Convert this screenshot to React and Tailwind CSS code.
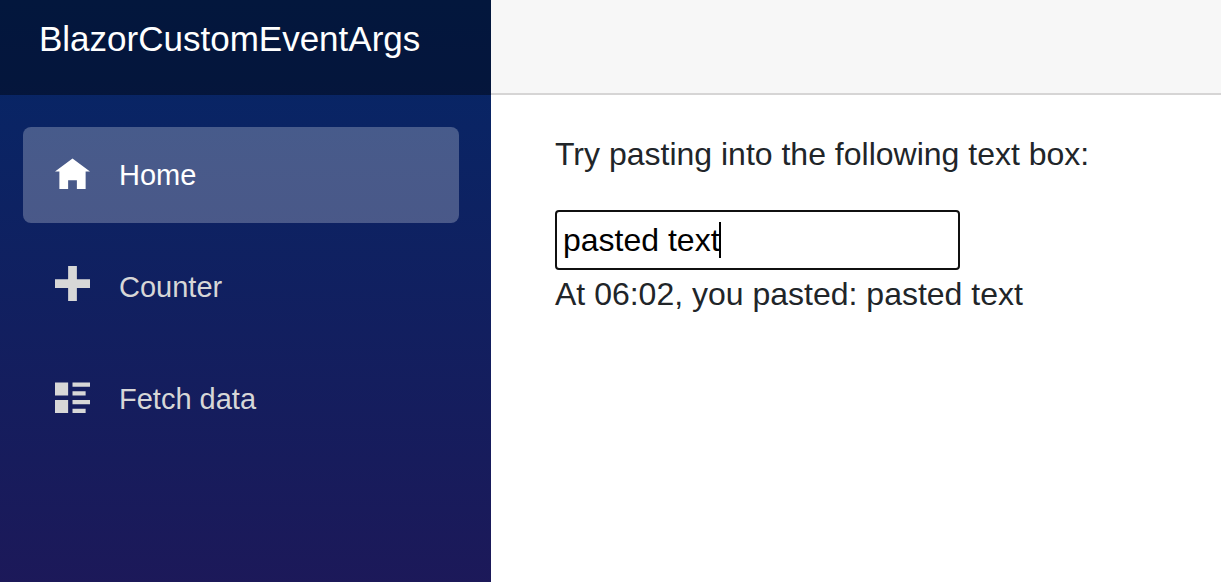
import { useState } from "react";

const links = [
  {
    label: "Home",
    path: "M4 1l-4 3h1v4h2v-2h2v2h2v-4h1l-4-3z",
  },
  {
    label: "Counter",
    path: "M3 0v3h-3v2h3v3h2v-3h3v-2h-3v-3h-2z",
  },
  {
    label: "Fetch data",
    path: "M0 1v3h3v-3h-3zm4 0v1h4v-1h-4zm0 2v1h3v-1h-3zm-4 2v3h3v-3h-3zm4 0v1h4v-1h-4zm0 2v1h3v-1h-3z",
  },
];

function NavItem({ link, active, onSelect }) {
  return (
    <li>
      <a
        href="#"
        aria-current={active ? "page" : undefined}
        onClick={(e) => {
          e.preventDefault();
          onSelect();
        }}
        className={
          "flex h-24 items-center gap-[29px] rounded-lg px-8 text-[29px] " +
          (active ? "bg-white/25 text-white" : "text-[#d7d7d7]")
        }
      >
        <svg viewBox="0 0 8 8" className="mb-[7px] size-[35px] shrink-0" fill="currentColor" aria-hidden="true">
          <path d={link.path} />
        </svg>
        {link.label}
      </a>
    </li>
  );
}

export default function App() {
  const [current, setCurrent] = useState("Home");
  const [text, setText] = useState("pasted text");
  return (
    <div className="flex min-h-screen bg-white font-['Liberation_Sans',Arial,sans-serif] text-[32px] leading-[48px] text-[#212529]">
      <aside className="w-[491px] shrink-0 bg-[linear-gradient(180deg,#052767_0,#3a0647_1350px)]">
        <div className="h-[95px] bg-black/40 px-[39px] pt-[13px]">
          <a href="#" className="text-[35px] leading-[52px] text-white">
            BlazorCustomEventArgs
          </a>
        </div>
        <nav className="pt-8 pr-8 pl-[23px]">
          <ul className="flex flex-col gap-4">
            {links.map((link) => (
              <NavItem
                key={link.label}
                link={link}
                active={current === link.label}
                onSelect={() => setCurrent(link.label)}
              />
            ))}
          </ul>
        </nav>
      </aside>
      <div className="min-w-0 flex-1">
        <header className="h-[95px] border-b-2 border-[#d6d5d5] bg-[#f7f7f7]" />
        <main className="px-16 pt-[35px]">
          <label htmlFor="paste" className="block">
            Try pasting into the following text box:
          </label>
          <div className="relative mt-8 w-[405px] max-w-full">
            <input
              id="paste"
              type="text"
              value={text}
              onChange={(e) => setText(e.target.value)}
              className="block h-[60px] w-full rounded-[4px] border-2 border-[#101010] bg-white px-1.5 text-black outline-none"
            />
            <span className="absolute top-3 left-[164px] h-9 w-0.5 bg-black" aria-hidden="true" />
          </div>
          <p>At 06:02, you pasted: pasted text</p>
        </main>
      </div>
    </div>
  );
}
